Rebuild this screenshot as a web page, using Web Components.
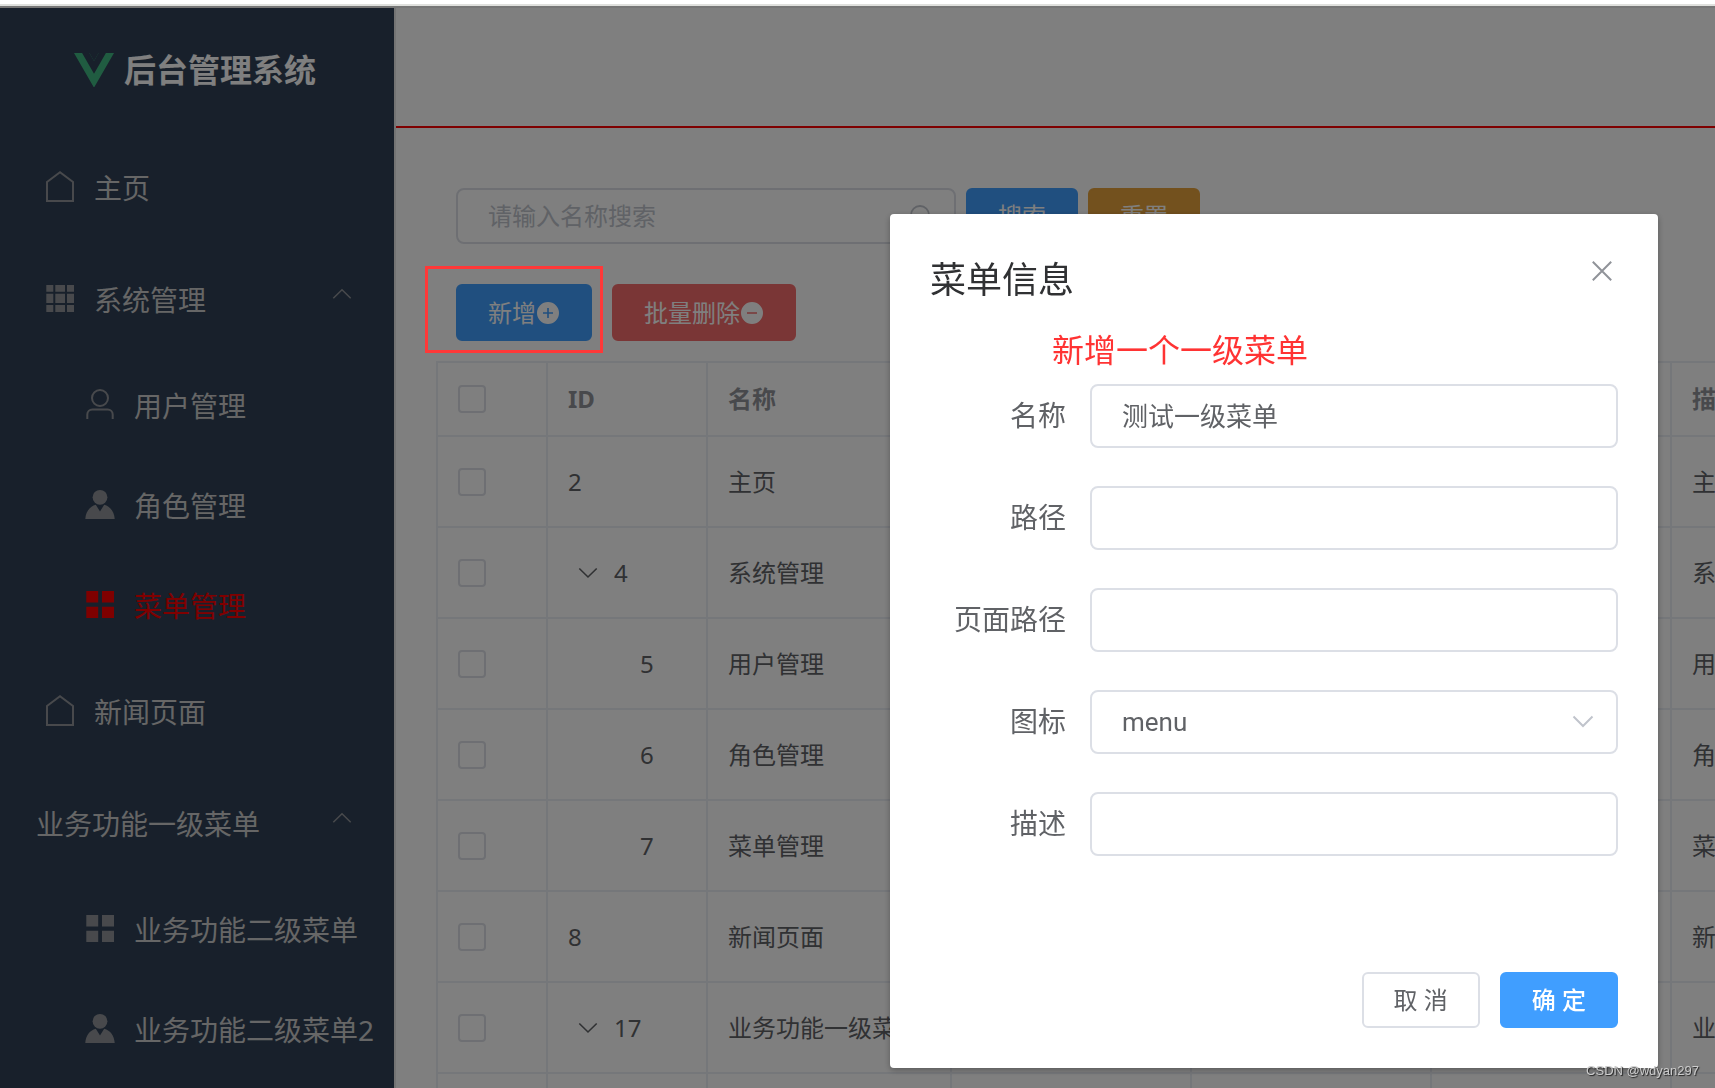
<!DOCTYPE html>
<html lang="zh-CN">
<head>
<meta charset="utf-8">
<title>后台管理系统</title>
<style>
  html, body { margin: 0; height: 100%; overflow: hidden; background: #fff; }
  body { font-family: "Noto Sans", "Noto Sans CJK SC", sans-serif; color: #606266; }
</style>
</head>
<body>
<admin-app></admin-app>

<template id="app-tpl">
  <style>
    :host { display: flex; flex-direction: column; height: 100vh; }
    .strip { flex: none; height: 4px; background: #fff; border-bottom: 2px solid #dfe0dd; }
    .layout { flex: 1; min-height: 0; display: flex; border-top: 2px solid #ececec; }
    .content { flex: 1; min-width: 0; display: flex; flex-direction: column; overflow: hidden; }
    header { flex: none; height: 118px; border-bottom: 2px solid #f00; }
    main { padding: 60px 0 0 40px; }
    .tools { display: flex; gap: 10px; padding-left: 20px; margin-bottom: 40px; }
    .actions { display: flex; gap: 20px; padding-left: 20px; margin-bottom: 20px; --button-height: 57px; }
    .marked { position: relative; }
    .marked::after { content: ""; position: absolute; z-index: 20; inset: -18px -11px -12px -31px; border: 3px solid #ff3838; pointer-events: none; }
    .watermark { position: fixed; z-index: 30; right: 16px; bottom: 8px; font: 13px/18px "Liberation Sans", sans-serif; color: #ccc; text-shadow: 1px 1px 1px #222; }
  </style>
  <div class="strip"></div>
  <div class="layout">
    <side-bar></side-bar>
    <div class="content">
      <header></header>
      <main>
        <div class="tools">
          <search-box></search-box>
          <ui-button kind="primary">搜索</ui-button>
          <ui-button kind="warning">重置</ui-button>
        </div>
        <div class="actions">
          <div class="marked"><ui-button kind="primary" icon="plus">新增</ui-button></div>
          <ui-button kind="danger" icon="minus">批量删除</ui-button>
        </div>
        <menu-table></menu-table>
      </main>
    </div>
  </div>
  <menu-dialog></menu-dialog>
  <div class="watermark">CSDN @wdyan297</div>
</template>

<template id="side-tpl">
  <style>
    :host { display: block; flex: none; width: 394px; background: #304156; border-right: 2px solid #e6e6e6; overflow: hidden; }
    .brand { display: flex; align-items: center; justify-content: center; gap: 10px; height: 124px; padding-right: 4px; color: #fff; font-size: 32px; line-height: 40px; font-weight: 700; }
    .brand ui-icon { --size: 40px; }
  </style>
  <div class="brand"><ui-icon name="logo"></ui-icon><span>后台管理系统</span></div>
  <nav>
    <nav-item icon="home">主页</nav-item>
    <nav-item icon="grid" open>系统管理</nav-item>
    <nav-item icon="user" sub>用户管理</nav-item>
    <nav-item icon="user-solid" sub>角色管理</nav-item>
    <nav-item icon="menu" sub active>菜单管理</nav-item>
    <nav-item icon="home">新闻页面</nav-item>
    <nav-item open>业务功能一级菜单</nav-item>
    <nav-item icon="menu" sub>业务功能二级菜单</nav-item>
    <nav-item icon="user-solid" sub>业务功能二级菜单2</nav-item>
  </nav>
</template>

<template id="table-tpl">
  <style>
    :host { display: block; overflow: hidden; }
    table { table-layout: fixed; width: 100%; min-width: 1560px; border-collapse: separate; border-spacing: 0; border: solid #ebeef5; border-width: 2px 0 0 2px; font-size: 24px; line-height: 46px; }
    th, td { box-sizing: border-box; height: 91px; padding: 0 20px; border: solid #ebeef5; border-width: 0 2px 2px 0; text-align: left; white-space: nowrap; overflow: hidden; }
    th { height: 74px; color: #909399; font-weight: 700; }
    .check { width: 110px; } .id { width: 160px; } .name { width: 244px; } .col { width: 240px; }
    input { appearance: none; display: block; box-sizing: border-box; width: 28px; height: 28px; margin: 0; border: 2px solid #dcdfe6; border-radius: 4px; background: #fff; }
    .cell { display: flex; align-items: center; gap: 6px; }
    .child { padding-left: 72px; }
    button { display: flex; align-items: center; justify-content: center; width: 40px; height: 40px; padding: 0; border: 0; background: none; color: #606266; }
    ui-icon { --size: 24px; }
  </style>
  <table>
    <thead><tr>
      <th class="check"><input type="checkbox" aria-label="全选"></th>
      <th class="id">ID</th><th class="name">名称</th>
      <th class="col"></th><th class="col"></th><th class="col"></th><th>描述</th>
    </tr></thead>
    <tbody></tbody>
  </table>
</template>

<template id="dialog-tpl">
  <style>
    :host { position: fixed; z-index: 10; inset: 6px 0 0 0; display: flex; justify-content: flex-end; align-items: flex-start; padding: 208px 57px 0 0; background: rgba(0,0,0,.5); box-sizing: border-box; }
    section { box-sizing: border-box; width: 768px; max-width: 100%; padding-bottom: 40px; border-radius: 4px; background: #fff; box-shadow: 0 2px 6px rgba(0,0,0,.3); }
    header { display: flex; justify-content: space-between; align-items: flex-start; padding: 40px 46px 18px 40px; }
    h2 { margin: 0; color: #303133; font-size: 36px; line-height: 52px; font-weight: 400; }
    .close { display: flex; align-items: center; height: 34px; padding: 0; border: 0; background: none; color: #909399; }
    .close ui-icon { --size: 20px; }
    .note { margin: 0 0 8px; padding-left: 162px; color: #ff3333; font-size: 32px; line-height: 52px; }
    form { display: flex; flex-direction: column; gap: 38px; padding: 0 40px 116px; }
    footer { display: flex; justify-content: flex-end; gap: 20px; padding: 0 40px; }
  </style>
  <section role="dialog" aria-label="菜单信息">
    <header><h2>菜单信息</h2><button class="close" aria-label="关闭"><ui-icon name="close"></ui-icon></button></header>
    <p class="note">新增一个一级菜单</p>
    <form>
      <form-field label="名称" value="测试一级菜单"></form-field>
      <form-field label="路径"></form-field>
      <form-field label="页面路径"></form-field>
      <form-field label="图标" value="menu" select></form-field>
      <form-field label="描述"></form-field>
    </form>
    <footer>
      <ui-button>取 消</ui-button>
      <ui-button kind="primary" strong>确 定</ui-button>
    </footer>
  </section>
</template>

<script>
const ICONS = {
  logo: ['0 0 262 227', '<path fill="#41b883" d="M161 0l-30 52L101 0H0l131 227L262 0z"/><path fill="#304156" d="M209 0h-48l-30 52L101 0H53l78 136z"/>'],
  home: ['0 0 36 36', '<path d="M5 12L18 2.2 31 12v19H5z" fill="none" stroke="currentColor" stroke-width="2"/>'],
  grid: ['0 0 36 36', '<path fill="currentColor" d="M4.3 3h7v6.7h-7zM13.3 3H23v6.7h-9.7zM25 3h7v6.7h-7zM4.3 11.7h7V21h-7zM13.3 11.7H23V21h-9.7zM25 11.7h7V21h-7zM4.3 23h7v7h-7zM13.3 23H23v7h-9.7zM25 23h7v7h-7z"/>'],
  user: ['0 0 36 36', '<g fill="none" stroke="currentColor" stroke-width="2"><circle cx="18" cy="10" r="8"/><path d="M5.3 31v-4.5a5 5 0 0 1 5-5h15.4a5 5 0 0 1 5 5V31"/></g>'],
  'user-solid': ['0 0 36 36', '<g fill="currentColor"><circle cx="18" cy="9.3" r="7.4"/><path d="M3.3 31c.4-7 4.3-12.6 10.5-14.2L18 23.5l4.2-6.7C28.4 18.400 32.3 24 32.7 31z"/></g>'],
  menu: ['0 0 36 36', '<path fill="currentColor" d="M4.3 3h11.9v11.5H4.3zM20 3h12v11.5H20zM4.3 18.8h11.9V30H4.3zM20 18.8h12V30H20z"/>'],
  up: ['0 0 24 24', '<path d="M3.3 10.3L12 1.7l8.7 8.6" fill="none" stroke="currentColor" stroke-width="1.5"/>'],
  down: ['0 0 24 24', '<path d="M3.3 7.5L12 16l8.7-8.5" fill="none" stroke="currentColor" stroke-width="1.6"/>'],
  select: ['0 0 24 24', '<path d="M2.5 6.5L12 16l9.500-9.500" fill="none" stroke="currentColor" stroke-width="2"/>'],
  close: ['0 0 20 20', '<path d="M.8.8l18.4 18.4M19.2.8L.8 19.2" fill="none" stroke="currentColor" stroke-width="2"/>'],
  search: ['0 0 24 24', '<g fill="none" stroke="currentColor" stroke-width="1.8"><circle cx="12" cy="11" r="9"/><path d="M18.5 17.500l4 4.500"/></g>'],
  plus: ['0 0 24 24', '<path fill="currentColor" fill-rule="evenodd" d="M12 1a11 11 0 1 0 0 22 11 11 0 0 0 0-22zm-.8 6h1.600v4.200H17v1.600h-4.200V17h-1.600v-4.200H7v-1.600h4.200z"/>'],
  minus: ['0 0 24 24', '<path fill="currentColor" fill-rule="evenodd" d="M12 1a11 11 0 1 0 0 22 11 11 0 0 0 0-22zM7 11.200h10v1.600H7z"/>']
};

class Base extends HTMLElement {
  constructor() { super(); this.attachShadow({ mode: 'open' }); }
  connectedCallback() { if (!this.shadowRoot.firstChild) this.render(); }
  clone(id) { this.shadowRoot.append(document.getElementById(id).content.cloneNode(true)); }
}

customElements.define('ui-icon', class extends Base {
  render() {
    const [box, body] = ICONS[this.getAttribute('name')];
    this.shadowRoot.innerHTML = `<style>:host{display:inline-flex;flex:none}svg{display:block;width:var(--size,36px);height:auto}</style><svg viewBox="${box}" aria-hidden="true">${body}</svg>`;
  }
});

customElements.define('ui-button', class extends Base {
  render() {
    const icon = this.getAttribute('icon');
    this.shadowRoot.innerHTML = `<style>
      :host { display: block; --bg: #fff; --line: #dcdfe6; --ink: #606266; }
      :host([kind]) { --line: var(--bg); --ink: #fff; }
      :host([kind=primary]) { --bg: #409eff; }
      :host([kind=warning]) { --bg: #e6a23c; }
      :host([kind=danger]) { --bg: #f56c6c; }
      button { display: flex; align-items: center; justify-content: center; box-sizing: border-box; height: var(--button-height, 56px); margin: 0; padding: 0 30px; border: 2px solid var(--line); border-radius: 6px; background: var(--bg); color: var(--ink); font-family: inherit; font-size: 24px; line-height: 32px; white-space: nowrap; }
      :host([strong]) button { font-weight: 500; }
      ui-icon { --size: 24px; }
    </style><button type="button"><slot></slot>${icon ? `<ui-icon name="${icon}"></ui-icon>` : ''}</button>`;
  }
});

customElements.define('nav-item', class extends Base {
  render() {
    const icon = this.getAttribute('icon');
    this.shadowRoot.innerHTML = `<style>
      :host { display: block; }
      a { display: flex; align-items: center; height: 112px; padding: 0 40px 0 36px; color: #ccc; font-size: 28px; line-height: 40px; white-space: nowrap; text-decoration: none; }
      :host([sub]) a { height: 100px; padding: 0 0 0 76px; }
      .icon { display: flex; justify-content: center; width: 48px; margin-right: 10px; color: #909399; }
      .arrow { --size: 24px; margin-left: auto; color: #909399; }
      :host([active]) a, :host([active]) .icon { color: #f00; }
    </style><a href="#">${icon ? `<span class="icon"><ui-icon name="${icon}"></ui-icon></span>` : ''}<slot></slot>${this.hasAttribute('open') ? '<ui-icon class="arrow" name="up"></ui-icon>' : ''}</a>`;
  }
});

customElements.define('search-box', class extends Base {
  render() {
    this.shadowRoot.innerHTML = `<style>
      :host { display: flex; align-items: center; box-sizing: border-box; width: 500px; height: 56px; padding: 0 22px 0 30px; border: 2px solid #dcdfe6; border-radius: 8px; background: #fff; color: #c0c4cc; }
      input { flex: 1; min-width: 0; box-sizing: border-box; height: 48px; padding: 0 0 2px; border: 0; outline: 0; background: none; font-family: inherit; font-size: 24px; color: #606266; }
      input::placeholder { color: #c0c4cc; opacity: 1; }
      ui-icon { --size: 24px; }
    </style><input type="text" placeholder="请输入名称搜索" aria-label="名称"><ui-icon name="search"></ui-icon>`;
  }
});

customElements.define('form-field', class extends Base {
  render() {
    const value = this.getAttribute('value') || '';
    const control = this.hasAttribute('select')
      ? `<select id="f"><option>${value}</option></select><ui-icon name="select"></ui-icon>`
      : `<input id="f" type="text" value="${value}">`;
    this.shadowRoot.innerHTML = `<style>
      :host { display: flex; align-items: center; height: 64px; }
      label { flex: none; width: 136px; margin-right: 24px; padding-bottom: 2px; text-align: right; font-size: 28px; line-height: 40px; }
      .box { flex: 1; min-width: 0; display: flex; align-items: center; box-sizing: border-box; height: 64px; border: 2px solid #dcdfe6; border-radius: 8px; }
      input, select { appearance: none; flex: 1; min-width: 0; box-sizing: border-box; height: 60px; margin: 0; padding: 0 30px; border: 0; outline: 0; background: none; color: #606266; font-family: Roboto, "Noto Sans CJK SC", sans-serif; font-size: 26px; }
      input { padding-bottom: 4px; }
      ui-icon { --size: 24px; margin-right: 21px; color: #c0c4cc; pointer-events: none; }
    </style><label for="f">${this.getAttribute('label')}</label><div class="box">${control}</div>`;
  }
});

customElements.define('menu-table', class extends Base {
  render() {
    this.clone('table-tpl');
    const rows = [
      ['2', '主页', ''], ['4', '系统管理', 'open'], ['5', '用户管理', 'child'], ['6', '角色管理', 'child'],
      ['7', '菜单管理', 'child'], ['8', '新闻页面', ''], ['17', '业务功能一级菜单', 'open'], ['', '', '']
    ];
    this.shadowRoot.querySelector('tbody').innerHTML = rows.map(([id, name, kind]) => `<tr>
      <td><input type="checkbox" aria-label="选择"></td>
      <td><div class="cell ${kind}">${kind === 'open' ? '<button aria-label="收起"><ui-icon name="down"></ui-icon></button>' : ''}<span>${id}</span></div></td>
      <td>${name}</td><td></td><td></td><td></td><td>${name}</td></tr>`).join('');
  }
});

customElements.define('side-bar', class extends Base { render() { this.clone('side-tpl'); } });
customElements.define('menu-dialog', class extends Base { render() { this.clone('dialog-tpl'); } });
customElements.define('admin-app', class extends Base { render() { this.clone('app-tpl'); } });
</script>
</body>
</html>
